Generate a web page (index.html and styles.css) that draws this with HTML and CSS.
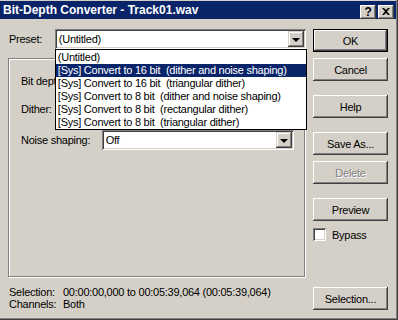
FILE: index.html
```html
<!DOCTYPE html>
<html lang="en">
<head>
  <meta charset="UTF-8" />
  <title>Bit-Depth Converter - Track01.wav</title>
  <link rel="stylesheet" href="styles.css">
</head>
<body>
  <div class="window">
    <div class="titlebar">
      <span class="title">Bit-Depth Converter - Track01.wav</span>
      <div class="caption-buttons">
        <span class="cap-btn cap-help">?</span>
        <span class="cap-btn cap-close">
          <svg width="8" height="7" viewBox="0 0 8 7"><path d="M0 0h2l2 2 2-2h2L5 3.5 8 7H6L4 5 2 7H0l3-3.5z" fill="#000"/></svg>
        </span>
      </div>
    </div>

    <div class="content">
      <div class="left">
        <div class="preset-row">
          <span class="label">Preset:</span>
          <div class="combo preset-combo">
            <span class="combo-text">(Untitled)</span>
            <span class="combo-arrow"><i></i></span>
            <!-- open dropdown, lies over the group box -->
            <ul class="droplist">
              <li>(Untitled)</li>
              <li class="selected">[Sys] Convert to 16 bit&nbsp; (dither and noise shaping)</li>
              <li>[Sys] Convert to 16 bit&nbsp; (triangular dither)</li>
              <li>[Sys] Convert to 8 bit&nbsp; (dither and noise shaping)</li>
              <li>[Sys] Convert to 8 bit&nbsp; (rectangular dither)</li>
              <li>[Sys] Convert to 8 bit&nbsp; (triangular dither)</li>
            </ul>
          </div>
        </div>

        <div class="group">
          <div class="field-row row-bits">
            <span class="field-label">Bit depth:</span>
            <div class="combo field-combo"><span class="combo-text"></span><span class="combo-arrow"><i></i></span></div>
          </div>
          <div class="field-row row-dither">
            <span class="field-label">Dither:</span>
            <div class="combo field-combo"><span class="combo-text"></span><span class="combo-arrow"><i></i></span></div>
          </div>
          <div class="field-row row-noise">
            <span class="field-label">Noise shaping:</span>
            <div class="combo field-combo"><span class="combo-text">Off</span><span class="combo-arrow"><i></i></span></div>
          </div>
        </div>

        <div class="info">
          <div class="info-row"><span class="info-key">Selection:</span><span>00:00:00,000 to 00:05:39,064 (00:05:39,064)</span></div>
          <div class="info-row"><span class="info-key">Channels:</span><span>Both</span></div>
        </div>
      </div>

      <div class="right">
        <button class="btn btn-default">OK</button>
        <button class="btn gap-s">Cancel</button>
        <button class="btn gap-l">Help</button>
        <button class="btn gap-l">Save As...</button>
        <button class="btn gap-s disabled">Delete</button>
        <button class="btn gap-l">Preview</button>
        <label class="check gap-s"><span class="box"></span>Bypass</label>
        <button class="btn btn-selection">Selection...</button>
      </div>
    </div>
  </div>
</body>
</html>
```

FILE: styles.css
```css
html, body {
  margin: 0;
  padding: 0;
}
body {
  font-family: "Liberation Sans", Arial, sans-serif;
  font-size: 11px;
  letter-spacing: -0.25px;
  color: #000;
  background: #d4d0c8;
}
.window {
  width: 398px;
  height: 320px;
  box-sizing: border-box;
  padding: 1px 2px 2px 0;
  background: #d4d0c8;
  box-shadow: inset -1px -1px #404040, inset -2px -2px #808080;
  display: flex;
  flex-direction: column;
}

/* title bar */
.titlebar {
  height: 18px;
  background: #0a246a;
  display: flex;
  align-items: center;
  justify-content: space-between;
  padding: 0 2px 0 3px;
}
.title {
  color: #fff;
  font-weight: bold;
  font-size: 12px;
  letter-spacing: 0;
}
.caption-buttons {
  display: flex;
  gap: 2px;
  margin-top: 3px;
}
.cap-btn {
  width: 16px;
  height: 14px;
  box-sizing: border-box;
  background: #d4d0c8;
  box-shadow: inset -1px -1px #404040, inset 1px 1px #fff, inset -2px -2px #808080;
  display: flex;
  align-items: center;
  justify-content: center;
  font-weight: bold;
  font-size: 12px;
  line-height: 14px;
}

/* body */
.content {
  flex: 1;
  display: flex;
  padding: 10px 0 0 8px;
}
.left {
  width: 298px;
  display: flex;
  flex-direction: column;
}
.right {
  width: 75px;
  margin-left: 7px;
  display: flex;
  flex-direction: column;
}

.preset-row {
  display: flex;
  align-items: center;
  height: 20px;
}
.label {
  width: 46px;
  padding-left: 1px;
}

/* combo box */
.combo {
  position: relative;
  height: 20px;
  box-sizing: border-box;
  background: #fff;
  box-shadow: inset 1px 1px #808080, inset -1px -1px #fff, inset 2px 2px #404040, inset -2px -2px #d4d0c8;
  display: flex;
  align-items: center;
}
.preset-combo {
  width: 252px;
}
.combo-text {
  flex: 1;
  padding-left: 4px;
}
.combo-arrow {
  width: 16px;
  height: 16px;
  margin-right: 2px;
  box-sizing: border-box;
  background: #d4d0c8;
  box-shadow: inset -1px -1px #404040, inset 1px 1px #d4d0c8, inset -2px -2px #808080, inset 2px 2px #fff;
  display: flex;
  align-items: center;
  justify-content: center;
}
.combo-arrow i {
  width: 0;
  height: 0;
  border-left: 4px solid transparent;
  border-right: 4px solid transparent;
  border-top: 4px solid #000;
  margin-top: 1px;
}

.droplist {
  position: absolute;
  top: 20px;
  left: 0;
  width: 252px;
  box-sizing: border-box;
  margin: 0;
  padding: 1px 0 0;
  list-style: none;
  background: #fff;
  border: 1px solid #000;
  z-index: 2;
}
.droplist li {
  height: 13px;
  line-height: 13px;
  padding-left: 2px;
  white-space: nowrap;
}
.droplist li.selected {
  background: #0a246a;
  color: #fff;
}

/* group box */
.group {
  margin-top: 9px;
  width: 297px;
  height: 219px;
  box-sizing: border-box;
  border: 1px solid #808080;
  box-shadow: inset 1px 1px #fff, 1px 1px #fff;
  padding: 12px 10px 0 12px;
}
.field-row {
  display: flex;
  align-items: center;
  height: 20px;
}
.row-dither { margin-top: 8px; }
.row-noise { margin-top: 11px; }
.field-label {
  width: 81px;
  white-space: nowrap;
}
.field-combo {
  width: 193px;
}

/* info */
.info {
  margin-top: 9px;
  padding-left: 1px;
}
.info-row {
  display: flex;
  line-height: 12px;
}
.info-key {
  width: 54px;
}

/* buttons */
.btn {
  width: 75px;
  height: 23px;
  padding: 0;
  border: none;
  background: #d4d0c8;
  font-family: inherit;
  font-size: 11px;
  letter-spacing: -0.25px;
  color: #000;
  box-shadow: inset -1px -1px #404040, inset 1px 1px #fff, inset -2px -2px #808080, inset 2px 2px #d4d0c8;
}
.btn-default {
  box-shadow: inset 0 0 0 1px #000, inset -2px -2px #404040, inset 2px 2px #fff, inset -3px -3px #808080;
}
.gap-s { margin-top: 6px; }
.gap-l { margin-top: 14px; }
.disabled {
  color: #808080;
  text-shadow: 1px 1px #fff;
}
.check {
  display: flex;
  align-items: center;
  height: 15px;
}
.box {
  width: 13px;
  height: 13px;
  box-sizing: border-box;
  background: #fff;
  box-shadow: inset 1px 1px #808080, inset -1px -1px #fff, inset 2px 2px #404040, inset -2px -2px #d4d0c8;
  margin-right: 6px;
}
.btn-selection {
  margin-top: auto;
  margin-bottom: 8px;
}
```
